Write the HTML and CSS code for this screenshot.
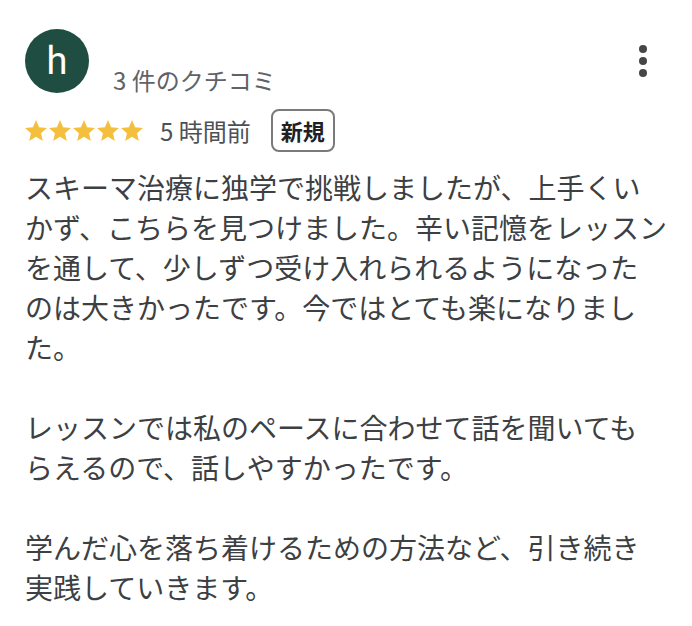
FILE: index.html
```html
<!DOCTYPE html>
<html lang="ja">
<head>
<meta charset="utf-8">
<title>Review</title>
<link rel="stylesheet" href="styles.css">
</head>
<body>
<div class="review">
  <div class="header">
    <div class="avatar">h</div>
    <div class="meta">3 件のクチコミ</div>
    <button class="more" aria-label="その他">
      <svg width="8" height="32" viewBox="0 0 8 32"><circle cx="4" cy="4" r="4"/><circle cx="4" cy="16" r="4"/><circle cx="4" cy="28" r="4"/></svg>
    </button>
  </div>
  <div class="rating-row">
    <div class="stars">
      <svg class="star" viewBox="2 2 20 20"><path d="M12 17.27L18.18 21l-1.64-7.03L22 9.24l-7.19-.61L12 2 9.19 8.63 2 9.24l5.46 4.73L5.82 21z"/></svg>
      <svg class="star" viewBox="2 2 20 20"><path d="M12 17.27L18.18 21l-1.64-7.03L22 9.24l-7.19-.61L12 2 9.19 8.63 2 9.24l5.46 4.73L5.82 21z"/></svg>
      <svg class="star" viewBox="2 2 20 20"><path d="M12 17.27L18.18 21l-1.64-7.03L22 9.24l-7.19-.61L12 2 9.19 8.63 2 9.24l5.46 4.73L5.82 21z"/></svg>
      <svg class="star" viewBox="2 2 20 20"><path d="M12 17.27L18.18 21l-1.64-7.03L22 9.24l-7.19-.61L12 2 9.19 8.63 2 9.24l5.46 4.73L5.82 21z"/></svg>
      <svg class="star" viewBox="2 2 20 20"><path d="M12 17.27L18.18 21l-1.64-7.03L22 9.24l-7.19-.61L12 2 9.19 8.63 2 9.24l5.46 4.73L5.82 21z"/></svg>
    </div>
    <span class="time">5 時間前</span>
    <span class="badge">新規</span>
  </div>
  <div class="body">
    <p>スキーマ治療に独学で挑戦しましたが、上手くい<br>かず、こちらを見つけました。辛い記憶をレッスン<br>を通して、少しずつ受け入れられるようになった<br>のは大きかったです。今ではとても楽になりまし<br>た。</p>
    <p>レッスンでは私のペースに合わせて話を聞いても<br>らえるので、話しやすかったです。</p>
    <p>学んだ心を落ち着けるための方法など、引き続き<br>実践していきます。</p>
  </div>
</div>
</body>
</html>
```

FILE: styles.css
```css
html, body {
  margin: 0;
  padding: 0;
  background: #ffffff;
}

body {
  font-family: "Noto Sans CJK JP", "Noto Sans", sans-serif;
  color: #3c4043;
}

.review {
  padding: 29px 25px 0 25px;
}

.header {
  display: flex;
  align-items: flex-start;
}

.avatar {
  width: 64px;
  height: 64px;
  border-radius: 50%;
  background: #1f4d41;
  color: #ffffff;
  font-family: Roboto, "Noto Sans", sans-serif;
  font-size: 38px;
  line-height: 64px;
  text-align: center;
  flex: none;
}

.meta {
  margin-left: 24px;
  margin-top: 38px;
  font-size: 24px;
  line-height: 26px;
  color: #5f6368;
}

.more {
  margin-left: auto;
  margin-right: 20px;
  margin-top: 16px;
  padding: 0;
  border: none;
  background: none;
  display: flex;
  fill: #444746;
}

.rating-row {
  display: flex;
  align-items: center;
  margin-top: 16px;
}

.stars {
  display: flex;
  gap: 2px;
}

.star {
  width: 22px;
  height: 22px;
  fill: #f5bf3e;
}

.time {
  margin-left: 17px;
  font-size: 24px;
  line-height: 32px;
  color: #4d5156;
}

.badge {
  margin-left: 20px;
  height: 39px;
  padding: 0 8px;
  border: 2px solid #7a7a7a;
  border-radius: 8px;
  font-size: 22px;
  font-weight: 700;
  line-height: 39px;
  color: #202124;
}

.body {
  margin-top: 15px;
  font-size: 28px;
  line-height: 40px;
  color: #3c4043;
  white-space: nowrap;
}

.body p {
  margin: 0 0 40px 0;
}
```
